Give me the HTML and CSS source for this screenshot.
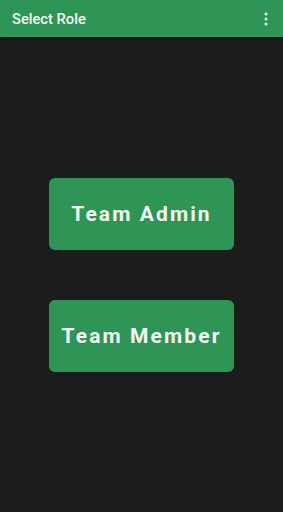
FILE: index.html
```html
<!DOCTYPE html>
<html>
<head>
<meta charset="utf-8">
<link rel="stylesheet" href="styles.css">
</head>
<body>
<div class="app">
  <header class="appbar">
    <span class="title">Select Role</span>
    <svg class="menu" width="4" height="14" viewBox="0 0 4 14">
      <circle cx="2" cy="2" r="1.5" fill="#e8f3ec"/>
      <circle cx="2" cy="7" r="1.5" fill="#e8f3ec"/>
      <circle cx="2" cy="12" r="1.5" fill="#e8f3ec"/>
    </svg>
  </header>
  <main class="content">
    <button class="role">Team Admin</button>
    <button class="role">Team Member</button>
  </main>
</div>
</body>
</html>
```

FILE: styles.css
```css
html, body {
  margin: 0;
  padding: 0;
  height: 100%;
  background: #1c1c1c;
}
.app {
  display: flex;
  flex-direction: column;
  height: 512px;
  font-family: Roboto, "Noto Sans", sans-serif;
}
.appbar {
  height: 37px;
  background: #2e9556;
  display: flex;
  align-items: center;
  justify-content: space-between;
  padding: 0 15px 0 12px;
  box-shadow: 0 1px 3px rgba(0,0,0,0.5);
}
.title {
  color: #f2f8f4;
  font-size: 14.7px;
  font-weight: 500;
}
.menu {
  display: block;
}
.content {
  display: flex;
  flex-direction: column;
  align-items: center;
  padding-top: 141px;
  gap: 50px;
}
.role {
  width: 185px;
  height: 72px;
  border: none;
  border-radius: 6px;
  background: #2e9556;
  color: #f4f8f3;
  font-family: Roboto, "Noto Sans", sans-serif;
  font-weight: 700;
  font-size: 21px;
  letter-spacing: 2.1px;
  padding: 0;
}
```
